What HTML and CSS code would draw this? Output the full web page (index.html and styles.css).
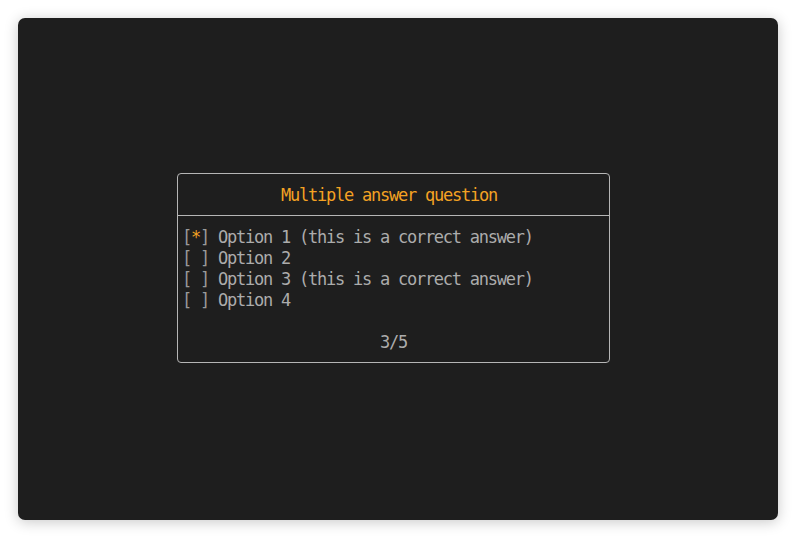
FILE: index.html
```html
<!DOCTYPE html>
<html>
<head>
<meta charset="utf-8">
<link rel="stylesheet" href="styles.css">
</head>
<body>
<div class="window">
  <div class="dialog">
    <div class="title">Multiple answer question</div>
    <div class="body">
      <div class="options">
        <div class="opt"><span class="br">[</span><span class="star">*</span><span class="br">]</span> Option 1 (this is a correct answer)</div>
        <div class="opt"><span class="br">[ ]</span> Option 2</div>
        <div class="opt"><span class="br">[ ]</span> Option 3 (this is a correct answer)</div>
        <div class="opt"><span class="br">[ ]</span> Option 4</div>
      </div>
      <div class="footer">3/5</div>
    </div>
  </div>
</div>
</body>
</html>
```
FILE: styles.css
```css
html, body {
  margin: 0;
  padding: 0;
  background: #ffffff;
}
body {
  width: 796px;
  height: 538px;
  padding: 18px;
  box-sizing: border-box;
}
.window {
  width: 760px;
  height: 502px;
  background: #1e1e1e;
  border-radius: 7px;
  box-shadow: 0 2px 14px rgba(0, 0, 0, 0.22);
  box-sizing: border-box;
  padding: 155px 0 0 159px;
  font-family: "DejaVu Sans Mono", "Liberation Mono", monospace;
  font-size: 17px;
  letter-spacing: -1.24px;
  color: #acacac;
}
.dialog {
  width: 433px;
  box-sizing: border-box;
  border: 1px solid #b6b6b6;
  border-radius: 4px;
}
.title {
  height: 41px;
  line-height: 43px;
  overflow: hidden;
  text-align: center;
  padding-right: 9px;
  color: #f4a223;
  border-bottom: 1px solid #b6b6b6;
  white-space: pre;
}
.body {
  padding: 10px 0 10px 4px;
}
.opt {
  height: 21px;
  line-height: 23px;
  white-space: pre;
}
.br {
  color: #9a9a9a;
}
.star {
  color: #f4a223;
}
.footer {
  margin-top: 21px;
  height: 21px;
  line-height: 23px;
  text-align: center;
  padding-right: 4px;
}
```
